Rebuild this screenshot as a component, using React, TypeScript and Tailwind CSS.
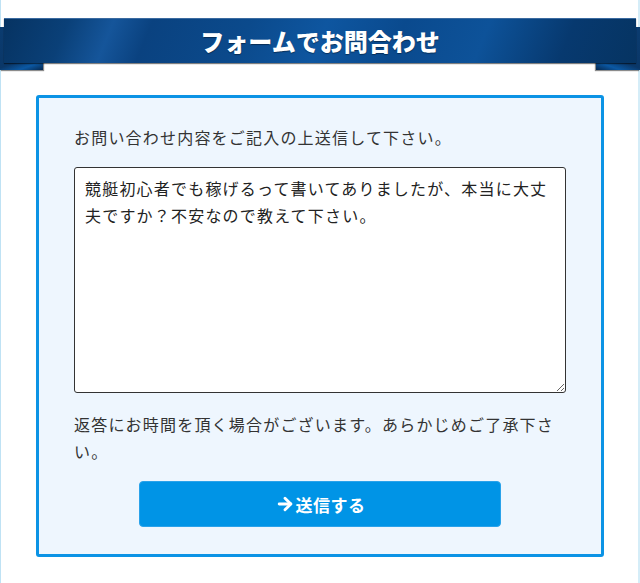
import React, { useEffect, useRef } from "react";
import { ArrowRight } from "lucide-react";

export default function App() {
  const ref = useRef<HTMLTextAreaElement>(null);
  useEffect(() => {
    const t = ref.current;
    if (t) {
      t.focus();
      const n = t.value.length;
      t.setSelectionRange(n, n);
    }
  }, []);
  return (
    <div className="relative w-[640px] h-[583px] overflow-hidden bg-white font-['Noto_Sans_CJK_JP','Noto_Sans',sans-serif] text-[#333]">
      <div className="absolute left-0 top-0 bottom-0 w-[1px] bg-[#bfe2f4]" />
      <div className="absolute right-0 top-0 bottom-0 w-[2px] bg-[#d5edf8]" />

      <div className="relative pt-[18px]">
        <div className="absolute left-0 top-[27px] w-[43px] h-[43px] bg-[linear-gradient(160deg,#0b3c70_0%,#0a3768_70%,#0b58a3_85%,#06284f_100%)] shadow-[1px_1px_1px_rgba(0,0,0,0.45)]" />
        <div className="absolute right-0 top-[27px] w-[44px] h-[43px] bg-[linear-gradient(200deg,#0b3c70_0%,#0a3768_70%,#0b58a3_85%,#06284f_100%)] shadow-[-1px_1px_1px_rgba(0,0,0,0.45)]" />
        <div className="relative z-10 mx-[4px] h-[45px] flex items-center justify-center border-t border-[#3a6aa0] bg-[linear-gradient(112deg,#063362_0%,#0a4078_10%,#15559a_17%,#0a4280_23%,#0b4a8c_38%,#0e56a0_50%,#0a4a8e_62%,#0d5299_75%,#07396f_88%,#063462_100%)] shadow-[0_1px_1px_rgba(0,0,0,0.5)]">
          <span className="text-white text-[24px] font-black leading-none [text-shadow:0_1px_1px_rgba(0,0,0,0.4)]">
            フォームでお問合わせ
          </span>
        </div>
      </div>

      <div className="mx-[36px] mt-[32px] rounded-[3px] border-[3px] border-[#0b93e5] bg-[#eef6fe] px-[35px] pt-[26px] pb-[27px] text-[16px] leading-[27px] tracking-[1.2px]">
        <p>お問い合わせ内容をご記入の上送信して下さい。</p>
        <textarea
          ref={ref}
          className="mt-[16px] block w-full h-[226px] rounded-[3px] border border-[#333] bg-white px-[10px] py-[7px] text-[16px] leading-[27px] tracking-[1.2px] text-[#222] caret-[#222] outline-none resize-y font-['Noto_Sans_CJK_JP','Noto_Sans',sans-serif]"
          defaultValue="競艇初心者でも稼げるって書いてありましたが、本当に大丈夫ですか？不安なので教えて下さい。"
        />
        <p className="mt-[18px]">返答にお時間を頂く場合がございます。あらかじめご了承下さい。</p>
        <div className="mt-[16px] flex justify-center">
          <button className="w-[362px] h-[46px] rounded-[4px] bg-[#0094e6] border border-[#2aa2ea] flex items-center justify-center gap-[1px] text-white text-[17px] font-bold tracking-[0.5px]">
            <ArrowRight size={20} strokeWidth={3.4} />
            <span>送信する</span>
          </button>
        </div>
      </div>
    </div>
  );
}
